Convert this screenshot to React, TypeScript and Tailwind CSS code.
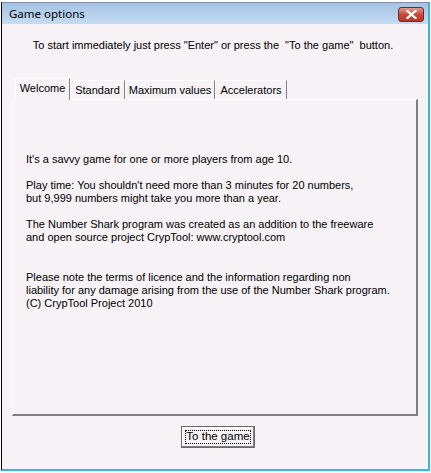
import React from "react";

const font = { fontFamily: '"Liberation Sans", Arial, sans-serif' };

export default function App() {
  return (
    <div className="w-[431px] h-[473px] bg-white overflow-hidden" style={font}>
      <div className="ml-[1px] mt-[2px] w-[429px] h-[469px] flex flex-col border-l border-l-black border-t border-t-[#7f8fa3] border-r-2 border-r-[#36b8e3] border-b-2 border-b-[#36b8e3] bg-[#f6f2f6]">
        {/* title bar */}
        <div className="h-[21px] shrink-0 flex items-center justify-between pl-[7px] pr-[4px] bg-gradient-to-b from-[#a4c2e4] to-[#c6dcf2]">
          <span className="text-[11.5px] text-black leading-none" style={{ fontFamily: '"Noto Sans", "Liberation Sans", sans-serif' }}>Game options</span>
          <div className="w-[26px] h-[15px] rounded-[3px] border border-[#6e2a28] bg-gradient-to-b from-[#e39a8f] via-[#c8463a] to-[#b9382c] flex items-center justify-center mt-[1px]">
            <svg width="11" height="9" viewBox="0 0 11 9">
              <path d="M1.5 1 L9.5 8 M9.5 1 L1.5 8" stroke="#ffffff" strokeWidth="2.2" strokeLinecap="square" />
            </svg>
          </div>
        </div>
        {/* body */}
        <div className="flex-1 flex flex-col">
          <div className="text-[11px] text-black text-center pt-[15px] pr-[4px] leading-[13px] whitespace-pre">
            {'To start immediately just press "Enter" or press the  "To the game"  button.'}
          </div>
          <div className="mt-[25px] ml-[10px] w-[406px]">
            {/* tabs */}
            <div className="flex items-end h-[22px] pl-[3px]">
              <div className="w-[55px] h-[22px] pt-[3px] text-center bg-[#f6f2f6] border-t border-l border-t-white border-l-white border-r border-r-[#808080] text-[11px] leading-[13px] text-black relative z-10 -mb-[1px] rounded-tl-[2px]">
                Welcome
              </div>
              <div className="w-[55px] h-[19px] pt-[3px] text-center border-t border-l border-t-white border-l-white border-r border-r-[#808080] text-[11px] text-black leading-[13px] rounded-tl-[2px]">
                Standard
              </div>
              <div className="w-[90px] h-[19px] pt-[3px] text-center border-t border-l border-t-white border-l-white border-r border-r-[#808080] text-[11px] text-black leading-[13px] rounded-tl-[2px]">
                Maximum values
              </div>
              <div className="w-[72px] h-[19px] pt-[3px] text-center border-t border-l border-t-white border-l-white border-r border-r-[#808080] text-[11px] text-black leading-[13px] rounded-tl-[2px]">
                Accelerators
              </div>
            </div>
            {/* panel */}
            <div className="h-[317px] border-t border-l border-t-white border-l-white border-r-2 border-b-2 border-r-[#808080] border-b-[#808080] pl-[13px] pt-[53px] text-[11px] text-black leading-[13px]">
              <p>It's a savvy game for one or more players from age 10.</p>
              <p className="mt-[13px]">Play time: You shouldn't need more than 3 minutes for 20 numbers,</p>
              <p>but 9,999 numbers might take you more than a year.</p>
              <p className="mt-[13px]">The Number Shark program was created as an addition to the freeware</p>
              <p>and open source project CrypTool: www.cryptool.com</p>
              <p className="mt-[27px]">Please note the terms of licence and the information regarding non</p>
              <p>liability for any damage arising from the use of the Number Shark program.</p>
              <p>(C) CrypTool Project 2010</p>
            </div>
          </div>
          <div className="flex justify-center mt-[10px] pl-[6px]">
            <div className="w-[74px] h-[22px] border border-[#6a6a6a] bg-[#f6f2f6] shadow-[inset_-1px_-1px_0_#808080,inset_1px_1px_0_#ffffff] p-[3px]">
              <div className="w-full h-full border border-dotted border-black flex items-center justify-center text-[11.5px] text-black leading-none whitespace-nowrap">
                To the game
              </div>
            </div>
          </div>
        </div>
      </div>
    </div>
  );
}
